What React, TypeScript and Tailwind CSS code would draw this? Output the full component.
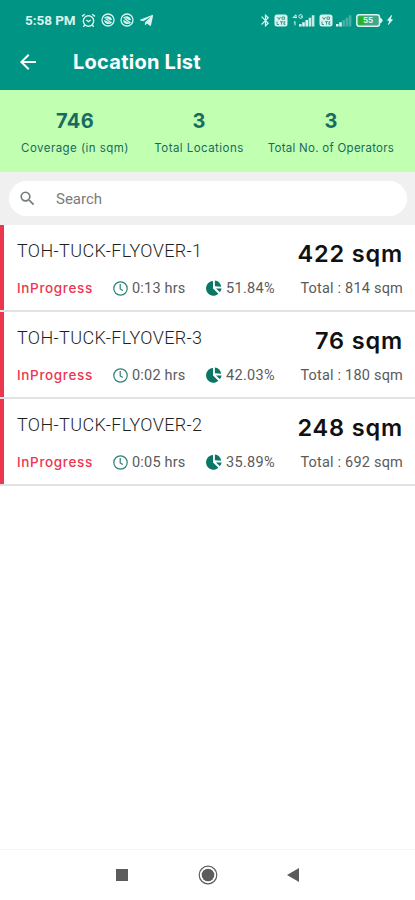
import { FaTelegramPlane } from "react-icons/fa";
import { MdArrowBack, MdBluetooth, MdBolt, MdSearch } from "react-icons/md";

interface Location {
    id: number;
    name: string;
    covered: string;
    hours: string;
    percent: string;
    total: string;
}

const locations: Location[] = [
    { id: 1, name: "TOH-TUCK-FLYOVER-1", covered: "422 sqm", hours: "0:13 hrs", percent: "51.84%", total: "Total : 814 sqm" },
    { id: 3, name: "TOH-TUCK-FLYOVER-3", covered: "76 sqm", hours: "0:02 hrs", percent: "42.03%", total: "Total : 180 sqm" },
    { id: 2, name: "TOH-TUCK-FLYOVER-2", covered: "248 sqm", hours: "0:05 hrs", percent: "35.89%", total: "Total : 692 sqm" },
];

function AlarmIcon() {
    return (
        <svg width="15" height="15" viewBox="0 0 15 15" fill="none" stroke="currentColor" strokeWidth="1.4">
            <circle cx="7.5" cy="8" r="5.2" />
            <path d="M1 3.4 3.8 1.2M14 3.4 11.2 1.2M3.6 12 2.4 13.8M11.4 12l1.2 1.8M5.2 7l2.3 1.6L9.8 7" />
        </svg>
    );
}

function BadgeIcon() {
    return (
        <svg width="14" height="14" viewBox="0 0 14 14" fill="none" stroke="currentColor" strokeWidth="1.3">
            <circle cx="7" cy="7" r="6" />
            <path d="M3.5 5.2c2-2.4 6-1.6 7 1.8M10.5 9c-2 2.4-6 1.6-7-1.8M4.6 5.4l5.2 4.2M4.8 8.4l3.4 2M6 4.4l3.6 2.4" />
        </svg>
    );
}

function VolteIcon() {
    return (
        <svg width="14" height="13" viewBox="0 0 14 13">
            <rect x="0.5" y="0.5" width="13" height="12" rx="2.5" fill="#d9f3ee" />
            <path d="M3.5 3 5 5.5 6.5 3M8 3h2.5v2.3H8zM3 7.5v3h2M6 7.7h3M7.5 7.7v3M11.3 7.7H9.9v2.8h1.4M9.9 9.1h1.3" fill="none" stroke="#3d9f91" />
        </svg>
    );
}

function SignalIcon({ weak = false }: { weak?: boolean }) {
    return (
        <svg width={weak ? 17 : 23} height="13" viewBox={weak ? "6 0 17 13" : "0 0 23 13"} fill="#d9f3ee">
            {!weak && (
                <path d="M1 3.5 4 .7v3.6M.8 3.5h4M10.5 1.5C9 .2 6.7.6 6.7 2.4s2.4 2.4 3.8 1.2V2.6H9M3 7.5v3.8M1.8 8.7 3 7.5" fill="none" stroke="#d9f3ee" />
            )}
            <path d="M7 10h2.6v2.5H7zM10.2 8.3h2.6v4.2h-2.6z" />
            <path d="M13.4 6H16v6.5h-2.6z" opacity={weak ? 0.3 : 1} />
            <path d="M16.6 3.7h2.6v8.8h-2.6zM19.8 1.2h2.6v11.3h-2.6z" opacity={weak ? 0.3 : 0.9} />
        </svg>
    );
}

function BatteryIcon() {
    return (
        <div className="relative flex h-[13px] w-[27px] items-center">
            <svg width="27" height="13" viewBox="0 0 27 13">
                <rect x="0.8" y="0.8" width="22.7" height="11.4" rx="2.5" fill="#43a58b" stroke="#d9f3ee" strokeWidth="1.5" />
                <rect x="2.5" y="2.5" width="7" height="8" fill="#22b522" />
                <path d="M23.5 3.5c2 .7 3 1.7 3 3s-1 2.3-3 3z" fill="#d9f3ee" />
            </svg>
            <span className="absolute left-[7px] text-[8px] font-bold leading-none text-[#e4f7e9]">55</span>
        </div>
    );
}

function ClockIcon() {
    return (
        <svg width="15" height="15" viewBox="0 0 15 15" fill="none" stroke="#2b8073" strokeWidth="1.2">
            <circle cx="7.5" cy="7.5" r="6.7" />
            <path d="M7.2 3v4.9l2.6 1.5" />
        </svg>
    );
}

function PieIcon() {
    return (
        <svg width="16" height="16" viewBox="0 0 16 16" fill="#0b7566">
            <path d="M7 .9v7.5l5.4 5.4A7.4 7.4 0 1 1 7 .9z" />
            <path d="M8.9.6a6.5 6.5 0 0 1 6.2 6.1L8.9 6.3z" />
            <path d="M10 8.4h5.6a6.8 6.8 0 0 1-1.9 3.7z" />
        </svg>
    );
}

function StatusBar() {
    return (
        <div className="flex h-10 items-center justify-between pl-[25px] pr-[18px] text-[#d9f3ee]">
            <div className="flex items-center">
                <span className="w-[56px] whitespace-nowrap font-['Roboto'] text-[13.5px] font-bold tracking-[-0.05px]">5:58 PM</span>
                <AlarmIcon />
                <span className="ml-[5px]"><BadgeIcon /></span>
                <span className="ml-[5px]"><BadgeIcon /></span>
                <FaTelegramPlane size={15} className="ml-[5px]" />
            </div>
            <div className="flex items-center">
                <MdBluetooth size={15} />
                <span className="ml-[1px]"><VolteIcon /></span>
                <span className="ml-[4px]"><SignalIcon /></span>
                <span className="ml-[4px]"><VolteIcon /></span>
                <span className="ml-[2px]"><SignalIcon weak /></span>
                <span className="ml-[4px]"><BatteryIcon /></span>
                <MdBolt size={14} className="rotate-12" />
            </div>
        </div>
    );
}

function LocationRow({ location }: { location: Location }) {
    return (
        <div className="flex h-[87px] flex-col border-b-2 border-[#e2e2e2] bg-white">
            <div className="h-full border-l-4 border-[#ec3650] pl-[13px] pr-[12px] font-['Roboto'] text-[14.5px] text-[#5b5b5b]">
                <div className="flex h-[50px] items-center justify-between">
                    <span className="text-[18px] font-light tracking-[0.37px] text-[#1f1f1f]">{location.name}</span>
                    <span className="mt-[8px] font-['Inter'] text-[23.5px] font-semibold tracking-[0.85px] text-[#111]">{location.covered}</span>
                </div>
                <div className="flex h-[26px] items-center">
                    <span className="w-[96px] font-['Inter'] text-[13.5px] font-medium tracking-[0.65px] text-[#ec3650]">InProgress</span>
                    <ClockIcon />
                    <span className="ml-[4px] w-[74px] pt-[2px] tracking-[0.2px]">{location.hours}</span>
                    <PieIcon />
                    <span className="ml-[4px] pt-[2px] tracking-[0.3px]">{location.percent}</span>
                    <span className="ml-auto pt-[2px] tracking-[0.2px]">{location.total}</span>
                </div>
            </div>
        </div>
    );
}

export default function App() {
    return (
        <div className="flex h-[900px] w-[415px] flex-col overflow-hidden bg-white font-['Inter',sans-serif]">
            <header className="h-[90px] shrink-0 bg-[#009485]">
                <StatusBar />
                <div className="flex h-[43px] items-center pl-[16px] text-white">
                    <MdArrowBack size={24} />
                    <h1 className="ml-[33px] text-[20px] font-bold tracking-[0.25px]">Location List</h1>
                </div>
            </header>

            {/* Totals */}
            <section className="flex h-[82px] shrink-0 bg-[#c1ffb1] text-center text-[#176b61]">
                <div className="ml-[15px] w-[120px] pt-[16px]">
                    <div className="text-[20px] font-bold leading-[31px] tracking-[0.3px]">746</div>
                    <div className="whitespace-nowrap text-[11.5px] leading-[22px] tracking-[0.45px]">Coverage (in sqm)</div>
                </div>
                <div className="ml-[14px] w-[100px] pt-[16px]">
                    <div className="text-[20px] font-bold leading-[31px]">3</div>
                    <div className="whitespace-nowrap text-[11.5px] leading-[22px] tracking-[0.45px]">Total Locations</div>
                </div>
                <div className="ml-[17px] w-[130px] pt-[16px]">
                    <div className="text-[20px] font-bold leading-[31px]">3</div>
                    <div className="whitespace-nowrap text-[11.5px] leading-[22px] tracking-[0.27px]">Total No. of Operators</div>
                </div>
            </section>

            <div className="h-[53px] shrink-0 bg-[#f0f0f0] pl-[9px] pr-[8px] pt-[9px]">
                <div className="flex h-[35px] items-center rounded-full bg-white pl-[9px]">
                    <MdSearch size={19} className="text-[#747b7b]" />
                    <span className="ml-[19px] mt-[2px] font-['Roboto'] text-[15px] text-[#7b7b7b]">Search</span>
                </div>
            </div>

            <main className="flex-1">
                {locations.map((location) => (
                    <LocationRow key={location.id} location={location} />
                ))}
            </main>

            {/* Android navigation */}
            <nav className="flex h-[51px] shrink-0 items-center border-t border-[#f5f5f5] pl-[116px] text-[#5c5c5c]">
                <div className="size-3 bg-current" />
                <svg className="ml-[70px]" width="20" height="20" viewBox="0 0 20 20">
                    <circle cx="10" cy="10" r="8.8" fill="none" stroke="currentColor" strokeWidth="1.2" />
                    <circle cx="10" cy="10" r="6.3" fill="currentColor" />
                </svg>
                <svg className="ml-[69px]" width="12" height="14" viewBox="0 0 12 14" fill="currentColor">
                    <path d="M12 0v14L0 7z" />
                </svg>
            </nav>
        </div>
    );
}
